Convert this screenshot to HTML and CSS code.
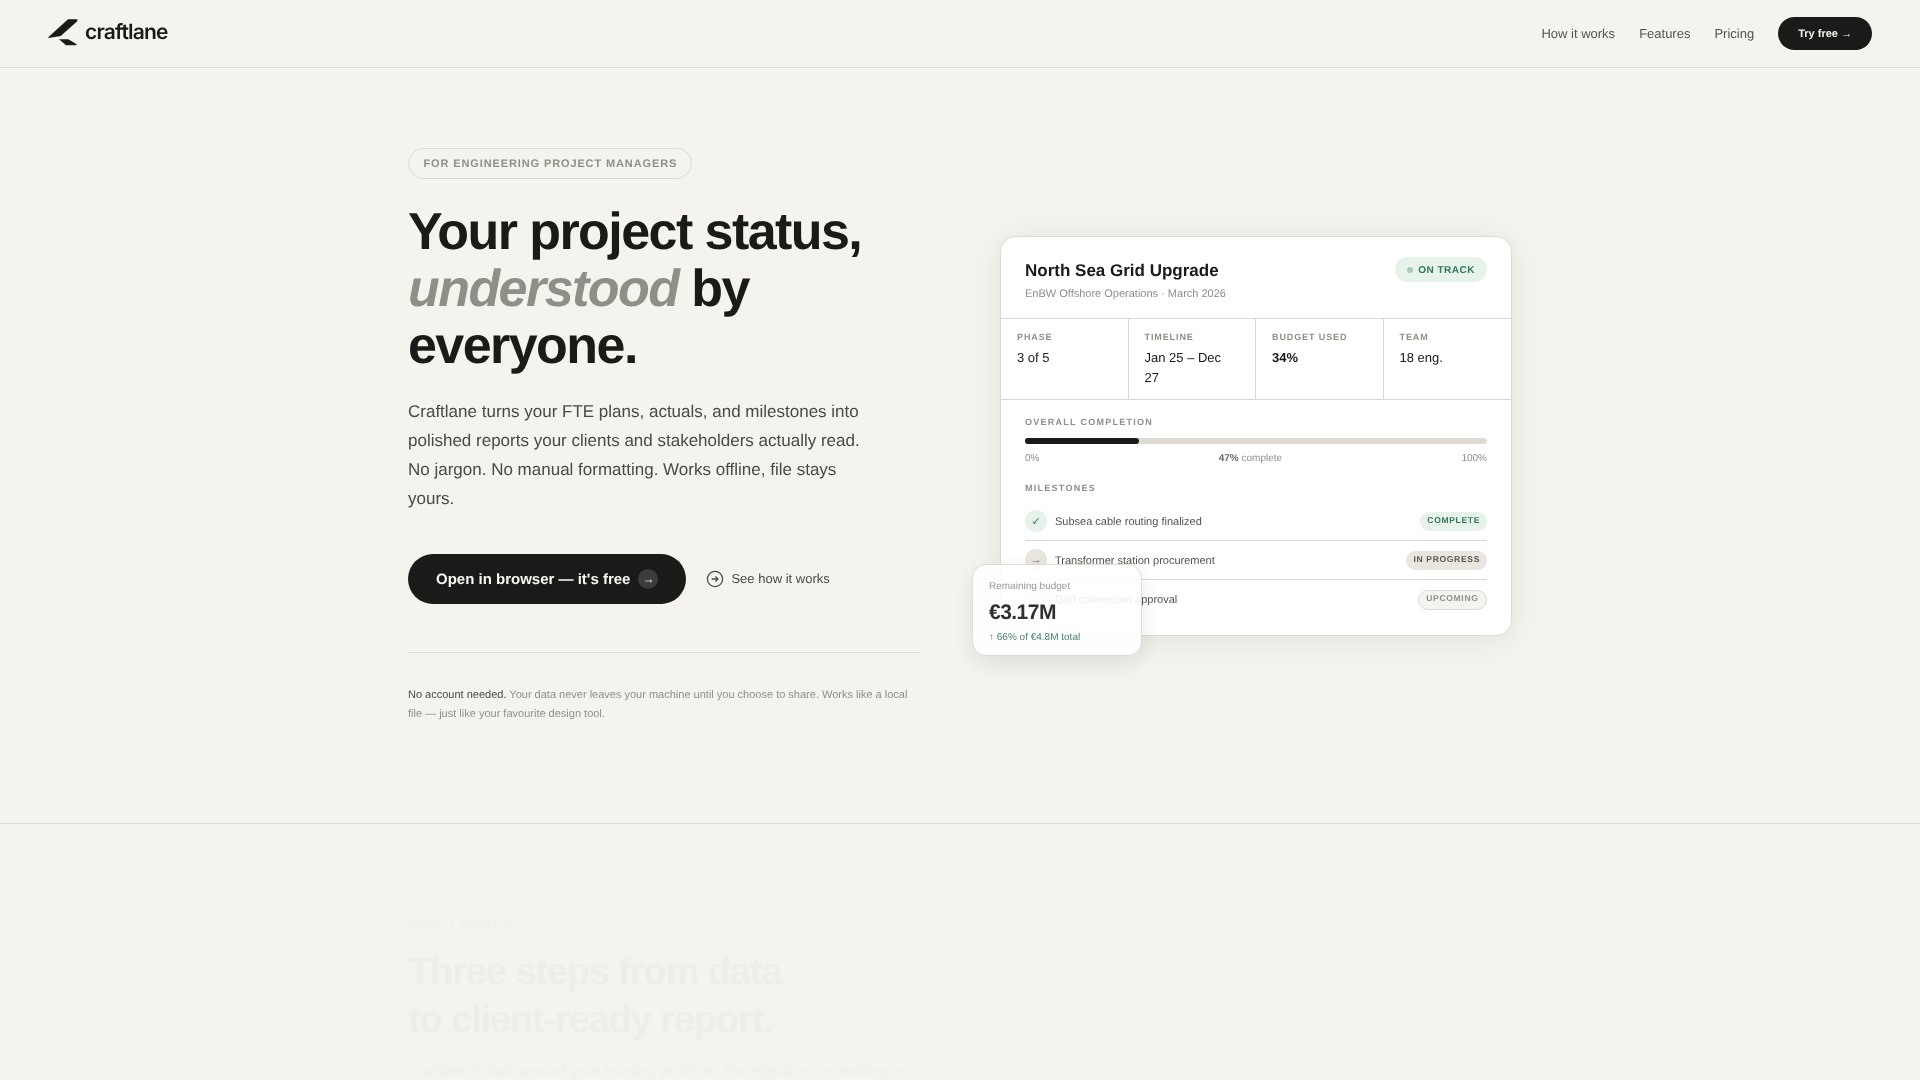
FILE: index.html
```html
<!DOCTYPE html>
<html lang="en">
<head>
<meta charset="utf-8">
<title>Craftlane</title>
<link rel="stylesheet" href="styles.css">
</head>
<body>
<nav class="nav">
  <a class="logo">
    <svg class="logo-mark" width="32" height="28" viewBox="0 0 32 28"><path d="M21 0.3H30.3V2.3L13.7 17L1.5 19V18Z" fill="#1a1a18"/><path d="M12 20.3H21.3L29.7 25.3L29 26.3H19Z" fill="#1a1a18"/></svg>
    <span class="logo-text">craftlane</span>
  </a>
  <div class="nav-links">
    <a>How it works</a>
    <a>Features</a>
    <a>Pricing</a>
    <a class="nav-cta">Try free →</a>
  </div>
</nav>
<section class="hero">
  <div class="hero-left">
    <span class="eyebrow">FOR ENGINEERING PROJECT MANAGERS</span>
    <h1>Your project status, <em>understood</em> by everyone.</h1>
    <p class="lead">Craftlane turns your FTE plans, actuals, and milestones into polished reports your clients and stakeholders actually read. No jargon. No manual formatting. Works offline, file stays yours.</p>
    <div class="actions">
      <a class="btn-primary">Open in browser — it's free <span class="btn-arrow">→</span></a>
      <a class="btn-ghost">
        <svg width="18" height="18" viewBox="0 0 18 18" fill="none" stroke="#4a4a45" stroke-width="1.3"><circle cx="9" cy="9" r="7.6"/><path d="M5.6 9H12M9.4 6.4 12 9l-2.6 2.6"/></svg>
        See how it works
      </a>
    </div>
    <p class="note"><strong>No account needed.</strong> Your data never leaves your machine until you choose to share. Works like a local file — just like your favourite design tool.</p>
  </div>
  <div class="hero-right">
    <div class="card">
      <div class="card-head">
        <div>
          <div class="card-title">North Sea Grid Upgrade</div>
          <div class="card-sub">EnBW Offshore Operations · March 2026</div>
        </div>
        <span class="status"><i class="status-dot"></i>ON TRACK</span>
      </div>
      <div class="stats">
        <div class="stat"><div class="stat-label">PHASE</div><div class="stat-value">3 of 5</div></div>
        <div class="stat"><div class="stat-label">TIMELINE</div><div class="stat-value">Jan 25 – Dec 27</div></div>
        <div class="stat"><div class="stat-label">BUDGET USED</div><div class="stat-value stat-strong">34%</div></div>
        <div class="stat"><div class="stat-label">TEAM</div><div class="stat-value">18 eng.</div></div>
      </div>
      <div class="card-body">
        <div class="section-label">OVERALL COMPLETION</div>
        <div class="bar"><div class="bar-fill" style="width:24.6%"></div></div>
        <div class="bar-scale"><span>0%</span><span><b>47%</b> complete</span><span>100%</span></div>
        <div class="section-label ms-label">MILESTONES</div>
        <div class="ms">
          <div class="ms-left"><span class="ms-icon ms-done">✓</span><span class="ms-text">Subsea cable routing finalized</span></div>
          <span class="pill pill-done">COMPLETE</span>
        </div>
        <div class="ms">
          <div class="ms-left"><span class="ms-icon ms-prog">→</span><span class="ms-text">Transformer station procurement</span></div>
          <span class="pill pill-prog">IN PROGRESS</span>
        </div>
        <div class="ms">
          <div class="ms-left"><span class="ms-icon ms-up">○</span><span class="ms-text">Grid connection approval</span></div>
          <span class="pill pill-up">UPCOMING</span>
        </div>
      </div>
      <div class="float">
        <div class="float-label">Remaining budget</div>
        <div class="float-value">€3.17M</div>
        <div class="float-delta">↑ 66% of €4.8M total</div>
      </div>
    </div>
  </div>
</section>
<section class="how">
  <div class="how-label">HOW IT WORKS</div>
  <h2>Three steps from data<br>to client-ready report.</h2>
  <p>Craftlane is built around your existing workflow. No migration, no training, no new habits to learn before your first report goes out.</p>
</section>
</body>
</html>
```
FILE: styles.css
```css
* { box-sizing: border-box; }
html, body { margin: 0; height: 1080px; overflow: hidden; }
body { background: #f4f3ee; color: #1a1a18; font-family: "Liberation Sans", Arial, sans-serif; text-rendering: geometricPrecision; }

.nav { height: 68px; border-bottom: 1px solid #dcd9d2; padding: 0 48px 0 47px; display: flex; align-items: center; justify-content: space-between; will-change: transform; }
.logo { display: flex; align-items: center; gap: 6px; margin-top: -3px; }
.logo-mark { display: block; margin-top: 1px; }
.logo-text { font-family: Inter, sans-serif; font-size: 21px; font-weight: 600; letter-spacing: -0.04em; color: #1a1a18; }
.nav-links { display: flex; align-items: center; gap: 24px; font-size: 13px; color: #55554f; }
.nav-cta { background: #1a1a18; color: #f4f3ee; font-size: 11px; font-weight: 700; height: 33px; padding: 0 20px; border-radius: 17px; display: flex; align-items: center; }

.hero { width: 1104px; margin: 0 auto; padding: 80px 0 100px; display: grid; grid-template-columns: 512px 512px; gap: 80px; align-items: center; }
.hero-left { display: flex; flex-direction: column; align-items: flex-start; will-change: transform; }
.eyebrow { border: 1px solid #dcd9d2; border-radius: 16px; height: 31px; padding: 0 14px 0 14.5px; display: flex; align-items: center; font-size: 11px; font-weight: 700; letter-spacing: 0.08em; color: #8f8f88; }
h1 { margin: 25px 0 0; font-size: 52px; line-height: 57px; font-weight: 700; letter-spacing: -0.03em; width: 480px; color: #1a1a18; }
h1 em { color: #8f8f88; font-style: italic; }
.lead { margin: 22px 0 0; font-size: 17px; line-height: 29px; color: #4a4a45; width: 470px; }
.actions { margin-top: 41px; display: flex; align-items: center; gap: 20px; }
.btn-primary { background: #1a1a18; color: #f8f7f3; height: 50px; padding: 0 28px; border-radius: 25px; display: flex; align-items: center; gap: 8px; font-size: 15px; font-weight: 700; }
.btn-arrow { width: 20px; height: 20px; border-radius: 50%; background: #3c3c3a; display: flex; align-items: center; justify-content: center; font-size: 12px; font-weight: 400; padding-bottom: 1px; }
.btn-ghost { display: flex; align-items: center; gap: 7px; font-size: 13px; color: #4a4a45; padding-bottom: 1px; }
.note { margin: 48px 0 0; padding-top: 33px; border-top: 1px solid #dcd9d2; width: 512px; font-size: 11px; line-height: 18.7px; color: #8f8f88; }
.note strong { font-weight: 400; color: #4a4a45; }

.hero-right { position: relative; will-change: transform; }
.card { position: relative; background: #fff; border: 1px solid #dcd9d2; border-radius: 16px; box-shadow: 0 4px 32px rgba(26, 26, 24, 0.08); }
.card-head { display: flex; justify-content: space-between; align-items: flex-start; padding: 20px 24px 18px; height: 82px; border-bottom: 1px solid #dcd9d2; }
.card-title { font-size: 17px; font-weight: 700; line-height: 24px; margin-top: 1.5px; color: #1a1a18; }
.card-sub { font-size: 11px; line-height: 14px; margin-top: 4.5px; color: #8f8f88; }
.status { display: flex; align-items: center; gap: 5px; height: 25px; padding: 1px 12px 0; border-radius: 13px; background: #e6f2ea; color: #2d7a57; font-size: 10px; font-weight: 700; letter-spacing: 0.05em; }
.status-dot { width: 6px; height: 6px; border-radius: 50%; background: #a3cdb5; margin-top: -1px; }
.stats { display: grid; grid-template-columns: repeat(4, 1fr); height: 81px; border-bottom: 1px solid #dcd9d2; }
.stat { padding: 12px 16px 0; border-right: 1px solid #dcd9d2; }
.stat:last-child { border-right: 0; }
.stat-label { font-size: 9px; font-weight: 700; letter-spacing: 0.1em; line-height: 12px; color: #8f8f88; }
.stat-value { font-size: 13px; line-height: 20px; margin-top: 5px; color: #1a1a18; }
.stat-strong { font-weight: 700; }
.card-body { padding: 16px 24px 16px; }
.section-label { font-size: 9px; font-weight: 700; letter-spacing: 0.14em; line-height: 12px; color: #8f8f88; }
.bar { margin-top: 10px; height: 6px; border-radius: 3px; background: #dfdad2; }
.bar-fill { height: 6px; border-radius: 3px; background: #1a1a18; }
.bar-scale { display: flex; justify-content: space-between; margin-top: 9px; font-size: 10px; line-height: 12px; color: #8f8f88; }
.bar-scale b { font-weight: 700; color: #6c6c66; }
.ms-label { margin-top: 17px; }
.ms { display: flex; align-items: center; justify-content: space-between; height: 39px; border-bottom: 1px solid #dcd9d2; }
.ms:last-child { border-bottom: 0; }
.ms-label + .ms { margin-top: 8px; }
.ms-left { display: flex; align-items: center; gap: 8px; font-size: 11px; color: #55554f; }
.ms-text { padding-top: 1px; }
.ms-icon { width: 22px; height: 22px; border-radius: 50%; display: flex; align-items: center; justify-content: center; font-size: 11px; }
.ms-done { background: #e6f2ea; color: #2d7a57; }
.ms-prog { background: #e9e6df; color: #6c6c66; }
.ms-up { background: #f4f3ee; border: 1px solid #dcd9d2; color: #8f8f88; }
.pill { height: 19px; padding: 0 7px 2px; border-radius: 10px; display: flex; align-items: center; font-size: 8.5px; font-weight: 700; letter-spacing: 0.08em; }
.pill-done { background: #e6f2ea; color: #2d7a57; }
.pill-prog { background: #e9e6df; color: #55554f; }
.pill-up { background: #f4f3ee; border: 1px solid #dcd9d2; color: #8f8f88; height: 20px; padding: 0 7.5px 3px; }
.float { position: absolute; left: -29px; bottom: -21px; width: 170px; height: 92px; padding: 15px 16px; background: #fff; border: 1px solid #dcd9d2; border-radius: 14px; box-shadow: 0 8px 24px rgba(26, 26, 24, 0.1); opacity: 0.9; }
.float-label { font-size: 10px; line-height: 13px; color: #8f8f88; }
.float-value { font-size: 21px; font-weight: 700; line-height: 24px; margin-top: 8px; letter-spacing: -0.025em; color: #1a1a18; }
.float-delta { font-size: 10px; line-height: 13px; margin-top: 6px; color: #2d7a57; }

.how { border-top: 1px solid #dcd9d2; padding: 94px 0 0; width: 100%; }
.how-label, .how h2, .how p { width: 1104px; margin-left: auto; margin-right: auto; opacity: 0.02; }
.how-label { font-size: 11px; font-weight: 700; letter-spacing: 0.14em; line-height: 14px; color: #8f8f88; }
.how h2 { margin-top: 16px; margin-bottom: 0; font-size: 38px; line-height: 48px; letter-spacing: -0.03em; font-weight: 700; }
.how p { margin-top: 15px; font-size: 15px; line-height: 26px; padding-right: 592px; color: #4a4a45; }
```
